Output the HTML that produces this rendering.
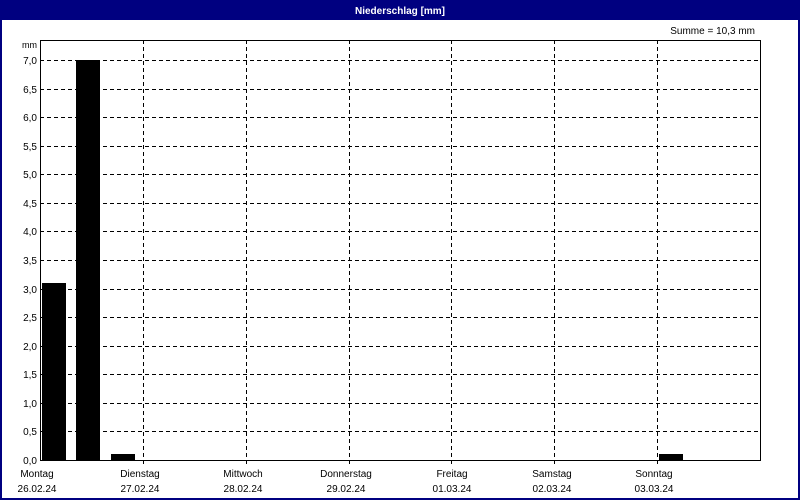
<!DOCTYPE html>
<html><head><meta charset="utf-8"><style>
html,body{margin:0;padding:0;background:#fff;}
svg{display:block}
text{font-family:"Liberation Sans",sans-serif;font-size:10px;fill:#000}
</style></head><body>
<svg width="800" height="500" viewBox="0 0 800 500" xmlns="http://www.w3.org/2000/svg" shape-rendering="crispEdges">
<rect x="0" y="0" width="800" height="500" fill="#fff"/>
<rect x="0" y="0" width="800" height="20" fill="#000080"/>
<rect x="0" y="0" width="2" height="500" fill="#000080"/>
<rect x="798" y="0" width="2" height="500" fill="#000080"/>
<rect x="0" y="498" width="800" height="2" fill="#000080"/>
<text x="400" y="14" text-anchor="middle" style="fill:#fff;font-weight:bold;font-size:10px">Niederschlag [mm]</text>
<text x="755" y="34" text-anchor="end">Summe = 10,3 mm</text>
<text x="37" y="48" text-anchor="end" style="font-size:9px">mm</text>
<g stroke="#000" stroke-width="1" stroke-dasharray="4,3" fill="none">
<path d="M40 60.5H760M40 89.5H760M40 117.5H760M40 146.5H760M40 174.5H760M40 203.5H760M40 231.5H760M40 260.5H760M40 289.5H760M40 317.5H760M40 346.5H760M40 374.5H760M40 403.5H760M40 431.5H760"/>
<path d="M143.5 40V465M246.5 40V465M349.5 40V465M451.5 40V465M554.5 40V465M657.5 40V465"/>
</g>
<path d="M40.5 40V460.5H760.5V40.5H40" stroke="#000" fill="none"/>
<g fill="#000">
<rect x="42" y="283" width="24" height="178"/>
<rect x="76" y="60" width="24" height="401"/>
<rect x="111" y="454" width="24" height="7"/>
<rect x="659" y="454" width="24" height="7"/>
</g>
<g text-anchor="end">
<text x="37" y="64">7,0</text><text x="37" y="93">6,5</text><text x="37" y="121">6,0</text>
<text x="37" y="150">5,5</text><text x="37" y="178">5,0</text><text x="37" y="207">4,5</text>
<text x="37" y="235">4,0</text><text x="37" y="264">3,5</text><text x="37" y="293">3,0</text>
<text x="37" y="321">2,5</text><text x="37" y="350">2,0</text><text x="37" y="378">1,5</text>
<text x="37" y="407">1,0</text><text x="37" y="435">0,5</text><text x="37" y="464">0,0</text>
</g>
<g text-anchor="middle">
<text x="37" y="477">Montag</text><text x="37" y="492">26.02.24</text>
<text x="140" y="477">Dienstag</text><text x="140" y="492">27.02.24</text>
<text x="243" y="477">Mittwoch</text><text x="243" y="492">28.02.24</text>
<text x="346" y="477">Donnerstag</text><text x="346" y="492">29.02.24</text>
<text x="452" y="477">Freitag</text><text x="452" y="492">01.03.24</text>
<text x="552" y="477">Samstag</text><text x="552" y="492">02.03.24</text>
<text x="654" y="477">Sonntag</text><text x="654" y="492">03.03.24</text>
</g>
</svg>
</body></html>
